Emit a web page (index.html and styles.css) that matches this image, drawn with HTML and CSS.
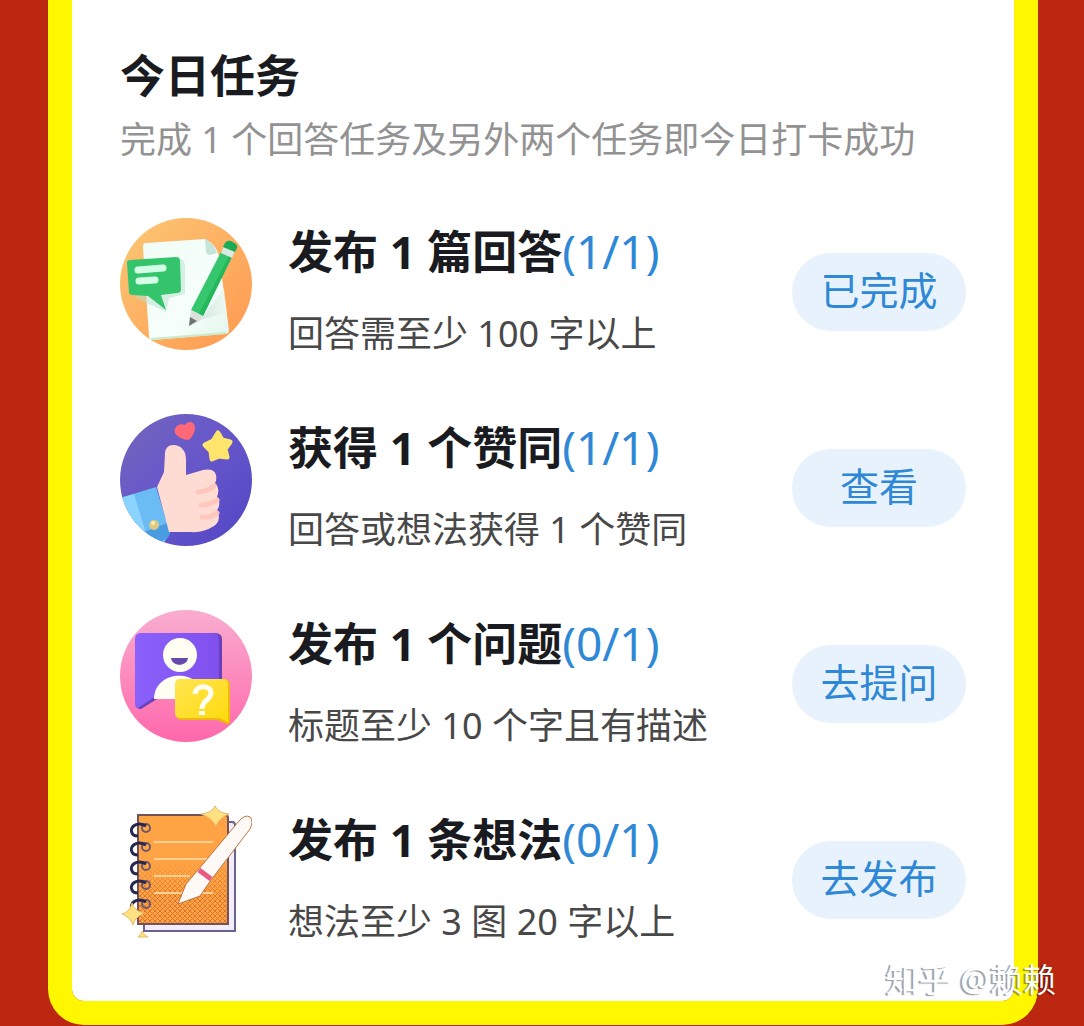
FILE: index.html
```html
<!DOCTYPE html>
<html lang="zh-CN">
<head>
<meta charset="UTF-8">
<title>今日任务</title>
<meta name="viewport" content="width=device-width,initial-scale=1">
<link rel="stylesheet" href="styles.css">
</head>
<body>

<main class="panel">
  <header class="panel-header">
    <h1>今日任务</h1>
    <p>完成 1 个回答任务及另外两个任务即今日打卡成功</p>
  </header>

  <ul class="tasks">
    <li class="task">
      <svg class="task-icon" viewBox="0 0 132 132" aria-hidden="true">
        <defs>
          <linearGradient id="orange" x1="0" y1="0" x2="1" y2="1"><stop offset="0" stop-color="#fbc875"/><stop offset="1" stop-color="#ff9850"/></linearGradient>
          <linearGradient id="paper" x1="0" y1="0" x2="1" y2="1"><stop offset="0" stop-color="#effcf4"/><stop offset=".6" stop-color="#f7fffc"/><stop offset="1" stop-color="#e3f5ec"/></linearGradient>
          <linearGradient id="pencilShade" x1="0" y1="0" x2="1" y2="0"><stop offset="0" stop-color="#b9d8ca"/><stop offset="1" stop-color="#edf8f3"/></linearGradient>
        </defs>
        <circle cx="66" cy="66" r="66" fill="url(#orange)"/>
        <path d="M26 25 85 21Q96 26 99 38L109 112Q109 116 105 116L32 122Q29 122 29 118L23 29Q23 25 26 25Z" fill="url(#paper)"/>
        <path d="M31 121 106 115" stroke="#c9eacb" stroke-width="2"/>
        <path d="M85 21Q94 25 97 35L90 37Q86 37 86 33Z" fill="#c5e5da"/>
        <path d="M80 102 104 70 107 95Z" fill="url(#pencilShade)" opacity=".5"/>
        <path d="M11 45 61 41Q65 43 65 48V76L49 80 46 94 16 80Z" fill="#b7dfcf" opacity=".5"/>
        <path d="M10 42 56 39Q60 39 60 43L61 71Q61 75 57 75L41 77 46 92 28 78 12 77Q9 77 9 74L7 45Q7 42 10 42Z" fill="#34c46c"/>
        <path d="M18 52 43 50M19 63 35 62" stroke="#d4ffe7" stroke-width="7" stroke-linecap="round"/>
        <path d="M101 34 112 39 83 98 71 92Z" fill="#35c66e"/>
        <path d="M109 38 112 39 83 98 79 96Z" fill="#23b85b"/>
        <path d="M104 28 115 33 112 40 101 35Z" fill="#dce9e2"/>
        <path d="M105 25Q107 22 111 23L116 26Q118 28 117 30L115 34 103 29Z" fill="#1cab55"/>
        <path d="M71 92 83 98 80 103 69 108Z" fill="#dce1dc"/>
        <path d="M70 99 77 103 69 108Z" fill="#6b7574"/>
      </svg>
      <div class="task-text">
        <h2>发布 1 篇回答<span>(1/1)</span></h2>
        <p>回答需至少 100 字以上</p>
      </div>
      <button class="task-btn" type="button">已完成</button>
    </li>

    <li class="task">
      <svg class="task-icon" viewBox="0 0 132 132" aria-hidden="true">
        <defs>
          <linearGradient id="violet" x1="0" y1="0" x2="1" y2="1"><stop offset="0" stop-color="#7365b9"/><stop offset=".4" stop-color="#6959ca"/><stop offset="1" stop-color="#5145c4"/></linearGradient>
          <clipPath id="round"><circle cx="66" cy="66" r="66"/></clipPath>
        </defs>
        <g clip-path="url(#round)">
          <path d="M0 0H132V132H0Z" fill="url(#violet)"/>
          <path d="M0 84 36 73 50 119 42 132H0Z" fill="#6bbcf5"/>
          <path d="M0 84 14 80 25 116 15 124 0 105Z" fill="#8ad4ff"/>
          <path d="M22 119 47 109 50 119 48 124 31 132Z" fill="#489cdf"/>
          <path d="M37 73 44 58 45 39Q46 31 53 31C62 31 66 38 66 45V61L83 56Q94 54 96 61 97 66 95 69C99 73 99 78 97 83 101 88 99 94 97 96 101 105 98 109 94 112Q83 119 71 118L49 118Z" fill="#ffdcd3"/>
          <path d="M94 72Q86 78 78 78M97 86Q90 91 81 91M97 99Q91 104 82 103" fill="none" stroke="#ffc6bd" stroke-width="5" stroke-linecap="round"/>
        </g>
        <circle cx="34" cy="111" r="5" fill="#dfc982"/>
        <circle cx="33" cy="109" r="2" fill="#fff0b4"/>
        <path d="M65 11C68 6 75 7 75 14 75 19 71 25 68 26 64 26 57 23 55 19 53 14 59 8 65 11Z" fill="#ff6876"/>
        <path d="M98 19 102 26 110 28 105 35 107 43 99 42 92 45 91 37 85 31 93 27Z" fill="#ffe56b" stroke="#ffe56b" stroke-width="5" stroke-linejoin="round"/>
      </svg>
      <div class="task-text">
        <h2>获得 1 个赞同<span>(1/1)</span></h2>
        <p>回答或想法获得 1 个赞同</p>
      </div>
      <button class="task-btn" type="button">查看</button>
    </li>

    <li class="task">
      <svg class="task-icon" viewBox="0 0 132 132" aria-hidden="true">
        <defs>
          <linearGradient id="pink" x1="0" y1="0" x2="0" y2="1"><stop offset="0" stop-color="#f9adcf"/><stop offset="1" stop-color="#ff68ac"/></linearGradient>
          <linearGradient id="purple" x1="0" y1="0" x2="1" y2="0"><stop offset="0" stop-color="#8b61fb"/><stop offset="1" stop-color="#8050ec"/></linearGradient>
          <linearGradient id="yellow" x1="0" y1="0" x2="1" y2="1"><stop offset="0" stop-color="#ffe652"/><stop offset="1" stop-color="#ffd90c"/></linearGradient>
        </defs>
        <circle cx="66" cy="66" r="66" fill="url(#pink)"/>
        <path d="M20 23H96Q102 24 102 29V84Q102 89 97 89H37L21 99Q16 99 16 95V27Z" fill="#6840bb"/>
        <path d="M21 23H93Q99 23 99 29V84Q99 88 95 88H33L18 98Q15 98 15 94V29Q15 23 21 23Z" fill="url(#purple)"/>
        <path d="M34 89C34 59 83 57 84 89Z" fill="#fffef2"/>
        <circle cx="60" cy="45" r="17" fill="#fffef2"/>
        <path d="M51 48H68C67 57 52 57 51 48Z" fill="#6549ae"/>
        <path d="M60 69H104Q110 69 110 75V112Q110 115 107 114L97 110H62Q56 110 56 104V74Z" fill="#eeb80c"/>
        <path d="M60 69H103Q108 69 108 74V112L99 108H60Q55 108 55 103V74Q55 69 60 69Z" fill="url(#yellow)"/>
        <path d="M75 84C76 74 91 75 91 83 91 90 82 90 82 99" fill="none" stroke="#fffef0" stroke-width="5"/>
        <path d="M79 101H85V105H79Z" fill="#fffef0"/>
      </svg>
      <div class="task-text">
        <h2>发布 1 个问题<span>(0/1)</span></h2>
        <p>标题至少 10 个字且有描述</p>
      </div>
      <button class="task-btn" type="button">去提问</button>
    </li>

    <li class="task">
      <svg class="task-icon" viewBox="0 0 132 132" aria-hidden="true">
        <defs>
          <linearGradient id="cover" x1="0" y1="0" x2="1" y2="1"><stop offset="0" stop-color="#ffa544"/><stop offset="1" stop-color="#ffa144"/></linearGradient>
          <linearGradient id="fade" x1="0" y1="0" x2="0" y2="1"><stop offset=".42" stop-color="#000"/><stop offset=".75" stop-color="#fff"/></linearGradient>
          <pattern id="dots" width="5" height="5" patternUnits="userSpaceOnUse"><path d="M0 0 5 5M5 0 0 5" stroke="#d9782c" stroke-width="1"/></pattern>
          <mask id="dotFade"><path d="M18 9H107V118H18Z" fill="url(#fade)"/></mask>
        </defs>
        <path d="M24 16H112Q115 16 115 19V125H24Z" fill="#f3edfb" stroke="#69618f" stroke-width="2"/>
        <path d="M18 9H105Q108 9 108 12V118H18Z" fill="url(#cover)" stroke="#755158" stroke-width="2"/>
        <path d="M19 10H107V117H19Z" fill="url(#dots)" mask="url(#dotFade)"/>
        <path d="M34 36H93M34 53H88M34 70H70M34 87H93" stroke="#ffd093" stroke-width="2"/>
        <g fill="none" stroke="#6c586b" stroke-width="2">
          <circle cx="26" cy="22" r="4"/><circle cx="26" cy="41" r="4"/><circle cx="26" cy="60" r="4"/><circle cx="26" cy="79" r="4"/><circle cx="26" cy="98" r="4"/>
        </g>
        <path d="M26 20C17 15 9 21 12 27Q13 30 18 30M26 39C17 34 9 40 12 46Q13 49 18 49M26 58C17 53 9 59 12 65Q13 68 18 68M26 77C17 72 9 78 12 84Q13 87 18 87M26 96C17 91 9 97 12 103Q13 106 18 106" fill="none" stroke="#252750" stroke-width="3"/>
        <path d="M78 64 119 15Q125 8 130 11 134 15 130 23L91 74 80 90 58 98 66 78Z" fill="#fffaf5" stroke="#bf7442" stroke-width="1"/>
        <path d="M79 64 91 73" stroke="#e85b83" stroke-width="5"/>
        <path d="M95 0Q98 7 109 8 99 12 96 20 92 12 81 8 92 7 95 0Z" fill="#ffe181" stroke="#e9b965"/>
        <path d="M12 97Q14 105 24 107 15 111 13 119 10 111 2 108 10 106 12 97ZM22 125Q24 129 28 131H18Q21 129 22 125Z" fill="#ffe181" stroke="#e9b965"/>
      </svg>
      <div class="task-text">
        <h2>发布 1 条想法<span>(0/1)</span></h2>
        <p>想法至少 3 图 20 字以上</p>
      </div>
      <button class="task-btn" type="button">去发布</button>
    </li>
  </ul>
</main>

<div class="watermark">知乎 @赖赖</div>

</body>
</html>
```
FILE: styles.css
```css
:root{
  --red:#bb2710;
  --yellow:#fff700;
  --blue:#2f88d6;
  --pill:#e7f2fd;
  --ink:#191b20;
}
*{margin:0;padding:0;box-sizing:border-box}
body{
  position:relative;
  padding:0 46px 1px 48px;
  background:var(--red);
  color:var(--ink);
  font-family:"Noto Sans","Noto Sans CJK SC",sans-serif;
}
.panel{
  padding:44px 48px 47px;
  background:#fff;
  background-clip:padding-box;
  border:24px solid var(--yellow);
  border-top:0;
  border-radius:0 0 36px 36px;
}
.panel-header{margin-bottom:46px}
h1{font-size:45px;line-height:64px;font-weight:700}
.panel-header p{font-size:36px;line-height:64px;color:#929292}
.tasks{display:flex;flex-direction:column;gap:48px;list-style:none}
.task{display:flex;align-items:center}
.task-icon{flex:none;align-self:flex-start;width:132px;height:132px;margin-right:36px}
.task-text{flex:1}
h2{font-size:45px;line-height:68px;font-weight:700;margin-bottom:16px}
h2 span{font-size:46px;line-height:1;font-weight:400;color:var(--blue)}
.task-text p{font-size:36px;line-height:64px;color:#484848}
.task-btn{
  width:174px;
  height:78px;
  padding-bottom:8px;
  border:none;
  border-radius:39px;
  background:var(--pill);
  color:var(--blue);
  font-family:inherit;
  font-size:39px;
  cursor:pointer;
}
.watermark{
  position:absolute;
  right:28px;
  bottom:22px;
  color:#fff;
  font-size:33px;
  line-height:48px;
  text-shadow:-2px 1px 1px rgba(0,0,0,.4);
}
```
